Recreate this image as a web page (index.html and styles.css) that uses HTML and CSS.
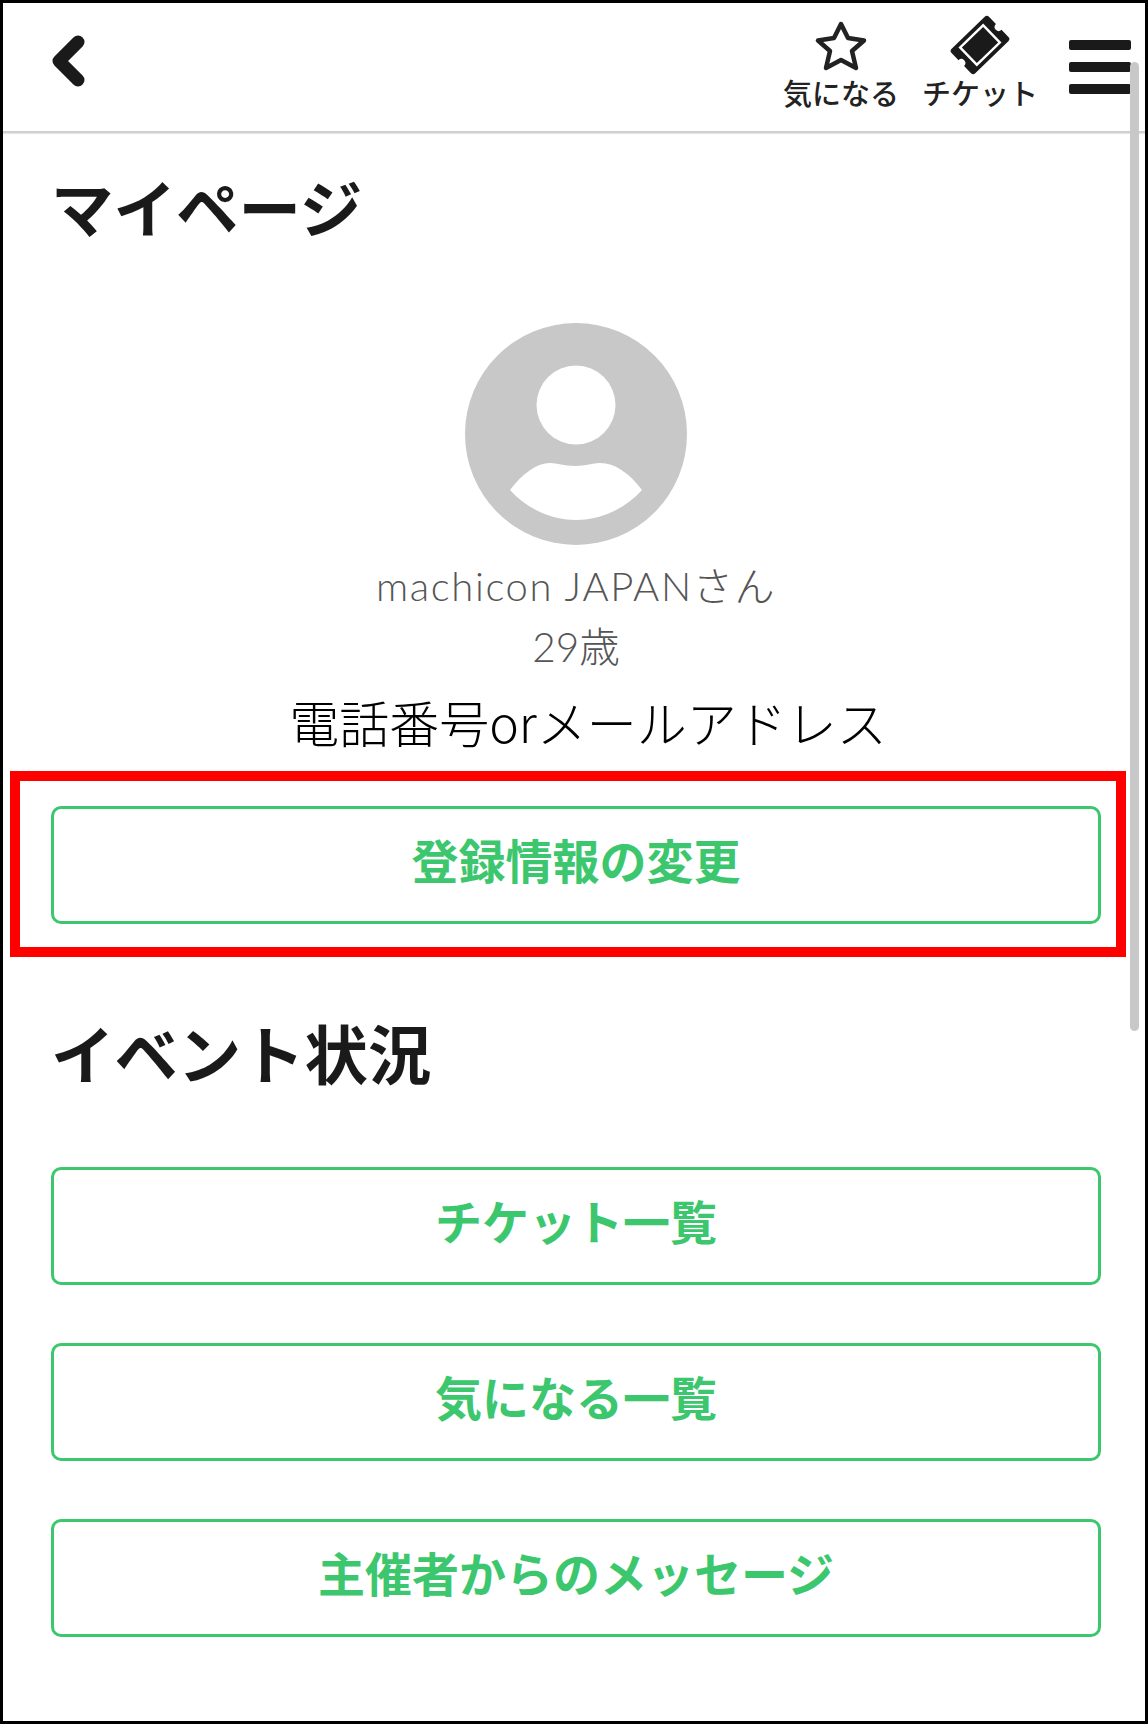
FILE: index.html
```html
<!DOCTYPE html>
<html lang="ja">
<head>
  <meta charset="UTF-8" />
  <meta name="viewport" content="width=device-width, initial-scale=1.0"/>
  <title>マイページ</title>
  <link rel="stylesheet" href="styles.css">
</head>
<body>
  <div class="frame">
    <header class="topbar">
      <svg class="back" viewBox="0 0 34 52" width="34" height="52">
        <path d="M26 7 L7 26 L26 45" fill="none" stroke="#1a1a1a" stroke-width="13" stroke-linecap="round" stroke-linejoin="round"/>
      </svg>
      <nav class="topnav">
        <a class="navitem">
          <svg class="navicon" viewBox="0 0 60 60" width="60" height="60">
            <path d="M30 9 L37 23 L53 25.500 L41 36 L45 53 L30 45 L15 53 L19 36 L7 25.500 L23 23 Z" fill="none" stroke="#222" stroke-width="4.500" stroke-linejoin="round"/>
          </svg>
          <span>気になる</span>
        </a>
        <a class="navitem">
          <svg class="navicon" viewBox="0 0 60 60" width="60" height="60">
            <g transform="translate(30 30) rotate(-44)">
              <path d="M-26 -14 Q-26 -17 -23 -17 L23 -17 Q26 -17 26 -14 L26 -4 A4 4 0 0 0 26 4 L26 14 Q26 17 23 17 L-23 17 Q-26 17 -26 14 L-26 4 A4 4 0 0 0 -26 -4 Z" fill="#1a1a1a"/>
              <rect x="-16" y="-12" width="32" height="24" fill="none" stroke="#fff" stroke-width="2.400"/>
            </g>
          </svg>
          <span>チケット</span>
        </a>
        <div class="burger"><i></i><i></i><i></i></div>
      </nav>
    </header>

    <main class="content">
      <h2 class="heading first">マイページ</h2>

      <section class="profile">
        <svg class="avatar" viewBox="0 0 222 222" width="222" height="222">
          <circle cx="111" cy="111" r="111" fill="#c8c8c8"/>
          <circle cx="111" cy="82" r="39.500" fill="#fff"/>
          <path d="M45 167 C58 150 72 140 85 140 C93 140 98 143 110 143 C122 143 127 140 135 140 C150 140 164 150 177 167 C160 186 135 197 111 197 C87 197 62 186 45 167 Z" fill="#fff"/>
        </svg>
        <p class="name">machicon JAPANさん</p>
        <p class="age">29歳</p>
        <p class="contact">電話番号orメールアドレス</p>
      </section>

      <a class="btn marked">登録情報の変更<span class="redbox"></span></a>

      <h2 class="heading">イベント状況</h2>

      <div class="btnlist">
        <a class="btn">チケット一覧</a>
        <a class="btn">気になる一覧</a>
        <a class="btn">主催者からのメッセージ</a>
      </div>
    </main>

    <div class="scrollbar"></div>
  </div>
</body>
</html>
```

FILE: styles.css
```css
* {
  box-sizing: border-box;
}

body {
  margin: 0;
  background: #fff;
  font-family: "Noto Sans CJK JP", "Noto Sans", sans-serif;
}

.frame {
  position: relative;
  width: 1148px;
  height: 1724px;
  border: 3px solid #000;
  overflow: hidden;
}

.topbar {
  display: flex;
  align-items: flex-start;
  justify-content: space-between;
  height: 130px;
  padding: 32px 14px 0 49px;
  border-bottom: 2px solid #d0d0d0;
  box-shadow: 0 1px 1px #e8e8e8;
}

.topnav {
  display: flex;
  align-items: flex-start;
  margin-top: -32px;
  padding-top: 12px;
}

.navitem {
  display: flex;
  flex-direction: column;
  align-items: center;
  margin-right: 23px;
  font-size: 29px;
  font-weight: 500;
  line-height: 34px;
  color: #222;
}

.navitem:last-of-type {
  margin-right: 31px;
}

.navicon {
  display: block;
}

.burger {
  display: flex;
  flex-direction: column;
  gap: 12px;
  margin-top: 25px;
}

.burger i {
  display: block;
  width: 62px;
  height: 10px;
  border-radius: 2px;
  background: #1a1a1a;
}

.content {
  padding: 0 44px 0 48px;
}

.heading {
  margin: 91px 0 0;
  font-size: 63.400px;
  font-weight: 700;
  line-height: 72px;
  color: #1a1a1a;
}

.heading.first {
  margin-top: 37px;
  font-size: 62.500px;
}

.profile {
  display: flex;
  flex-direction: column;
  align-items: center;
  margin-top: 81px;
}

.avatar {
  display: block;
}

.profile p {
  margin: 0;
}

.name {
  margin-top: 17px !important;
  font-family: Lato, "Noto Sans CJK JP", sans-serif;
  font-size: 40px;
  font-weight: 300;
  letter-spacing: 1.650px;
  line-height: 48px;
  color: #555;
}

.age {
  margin-top: 13px !important;
  font-family: Lato, "Noto Sans CJK JP", sans-serif;
  font-size: 40.500px;
  font-weight: 300;
  line-height: 48px;
  color: #555;
}

.contact {
  margin-top: 20px !important;
  padding-left: 24px;
  font-family: "Noto Sans CJK JP", sans-serif;
  font-size: 50px;
  font-weight: 300;
  line-height: 60px;
  color: #000;
  white-space: nowrap;
}

.btn {
  position: relative;
  display: flex;
  align-items: center;
  justify-content: center;
  width: 1050px;
  height: 118px;
  padding-bottom: 14px;
  border: 3px solid #3cc76e;
  border-radius: 10px;
  font-size: 47px;
  font-weight: 700;
  color: #3cc76e;
}

.btn.marked {
  margin-top: 55px;
}

.btnlist {
  display: flex;
  flex-direction: column;
  gap: 58px;
  margin-top: 80px;
}

/* annotation drawn over the button */
.redbox {
  position: absolute;
  top: -38px;
  left: -44px;
  width: 1116px;
  height: 186px;
  border: 10px solid #f00;
}

.scrollbar {
  position: absolute;
  top: 59px;
  right: 6px;
  width: 9px;
  height: 969px;
  border-radius: 5px;
  background: #c8c8c8;
}
```
